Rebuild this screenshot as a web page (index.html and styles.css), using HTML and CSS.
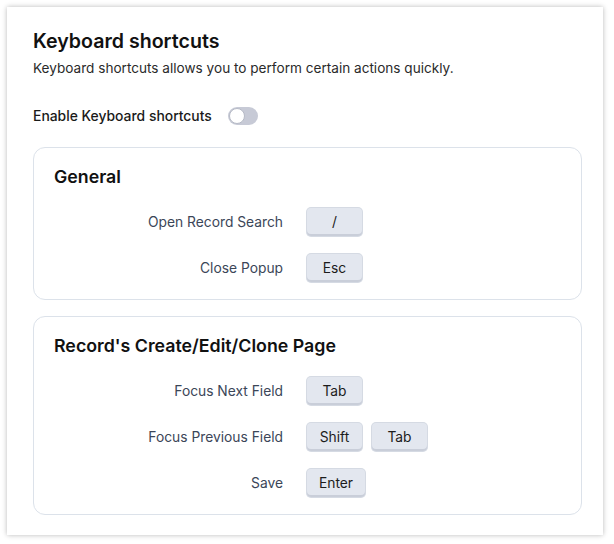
FILE: index.html
```html
<!DOCTYPE html>
<html>
<head>
<meta charset="utf-8">
<link rel="stylesheet" href="styles.css">
</head>
<body>
<div class="panel">
  <h1 class="title">Keyboard shortcuts</h1>
  <p class="desc">Keyboard shortcuts allows you to perform certain actions quickly.</p>
  <div class="enable">
    <span class="enable-label">Enable Keyboard shortcuts</span>
    <span class="toggle"><span class="knob"></span></span>
  </div>
  <section class="group">
    <h2 class="group-title">General</h2>
    <div class="rows">
      <div class="row"><span class="label">Open Record Search</span><span class="keys"><span class="key">/</span></span></div>
      <div class="row"><span class="label">Close Popup</span><span class="keys"><span class="key">Esc</span></span></div>
    </div>
  </section>
  <section class="group">
    <h2 class="group-title">Record's Create/Edit/Clone Page</h2>
    <div class="rows">
      <div class="row"><span class="label">Focus Next Field</span><span class="keys"><span class="key">Tab</span></span></div>
      <div class="row"><span class="label">Focus Previous Field</span><span class="keys"><span class="key">Shift</span><span class="key">Tab</span></span></div>
      <div class="row"><span class="label">Save</span><span class="keys"><span class="key">Enter</span></span></div>
    </div>
  </section>
</div>
</body>
</html>
```
FILE: styles.css
```css
* { box-sizing: border-box; }
html, body { margin: 0; padding: 0; background: #ffffff; }
body {
  font-family: Inter, "Noto Sans", sans-serif;
  color: #1a1a1a;
  padding: 7px 11px 9px 7px;
}
.panel {
  background: #fff;
  height: 528px;
  box-shadow: 0 0 5px rgba(0,0,0,0.28);
  padding: 21px 21px 0 26px;
}
.title {
  margin: 0;
  font-size: 19.6px;
  line-height: 26px;
  font-weight: 600;
  color: #111;
}
.desc {
  margin: 5px 0 0;
  font-size: 13.6px;
  line-height: 18px;
  color: #2a2a2a;
}
.enable {
  display: flex;
  align-items: center;
  margin-top: 30px;
  height: 18px;
}
.enable-label {
  font-size: 13.9px;
  font-weight: 500;
  color: #1a1a1a;
}
.toggle {
  margin-left: 16px;
  width: 30px;
  height: 18px;
  border-radius: 9px;
  background: #c7cad6;
  position: relative;
  display: inline-block;
}
.knob {
  position: absolute;
  left: 1px;
  top: 1px;
  width: 16px;
  height: 16px;
  border-radius: 50%;
  background: #fff;
  border: 1px solid #b6bac6;
}
.group {
  margin-top: 22px;
  border: 1px solid #dce2ea;
  border-radius: 12px;
  padding: 17px 20px 17px 20px;
}
.group + .group { margin-top: 16px; }
.group-title {
  margin: 0;
  font-size: 17.8px;
  line-height: 24px;
  font-weight: 600;
  color: #111;
}
.rows {
  margin-top: 19px;
  display: flex;
  flex-direction: column;
  gap: 18px;
}
.row {
  display: flex;
  align-items: center;
  gap: 24px;
}
.label {
  width: 229px;
  text-align: right;
  font-size: 13.8px;
  color: #3b4658;
}
.keys { display: flex; gap: 10px; }
.key {
  min-width: 55px;
  height: 28px;
  padding: 0 12px;
  display: inline-flex;
  align-items: center;
  justify-content: center;
  background: #e3e7ef;
  border-radius: 4px;
  box-shadow: inset 0 -2px 0 #c9ced9, 0 0 0 1px #d5dae3;
  font-size: 13.8px;
  color: #1c1c1c;
}
```
